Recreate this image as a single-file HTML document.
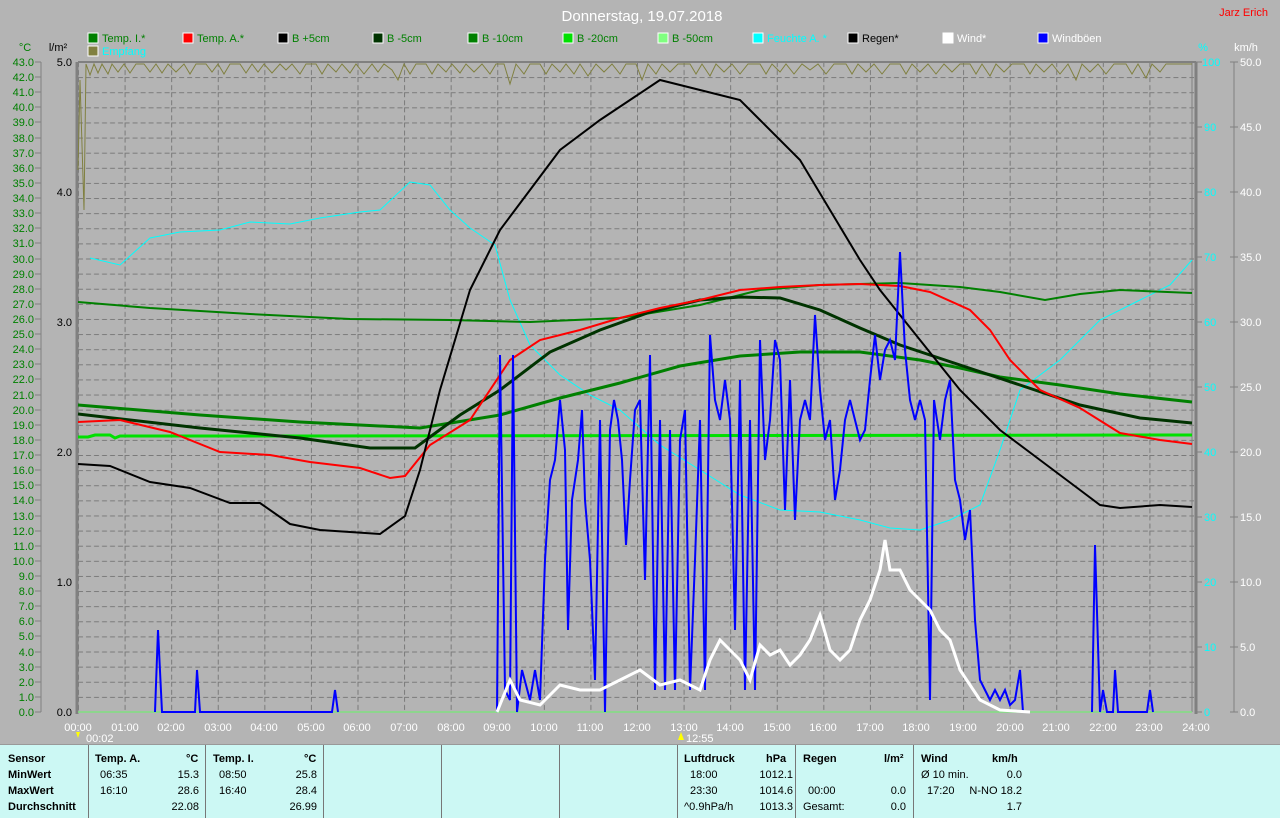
<!DOCTYPE html>
<html><head><meta charset="utf-8"><style>
body{margin:0;width:1280px;height:817px;background:#b4b4b4;overflow:hidden;font-family:"Liberation Sans",sans-serif;}
svg{position:absolute;left:0;top:0}
#tb{position:absolute;left:0;top:744px;width:1280px;height:73px;background:#ccf8f4;border-top:1px solid #999;font-size:11px;color:#000}
.d{position:absolute;top:0;height:73px;border-left:1px solid #777}
.t{position:absolute;white-space:nowrap}
.b{font-weight:bold}
</style></head><body>
<svg width="1280" height="744" font-family="Liberation Sans, sans-serif" font-size="11">
<defs>
<pattern id="g" patternUnits="userSpaceOnUse" x="78" y="62" width="46.583" height="15.116">
<line x1="0" y1="0.5" x2="46.583" y2="0.5" stroke="#7a7a7a" stroke-dasharray="5,3"/>
<line x1="0.5" y1="0" x2="0.5" y2="15.116" stroke="#7a7a7a" stroke-dasharray="5,3"/>
</pattern>
</defs>
<rect x="78" y="62" width="1116" height="650" fill="url(#g)"/>
<line x1="77" y1="62" x2="77" y2="714" stroke="#808080" stroke-width="3"/>
<line x1="1196" y1="62" x2="1196" y2="714" stroke="#808080" stroke-width="3"/>
<line x1="1192" y1="62" x2="1192" y2="712" stroke="#808080" stroke-width="1"/>
<line x1="78" y1="62" x2="1196" y2="62" stroke="#808080" stroke-width="2"/>
<line x1="78" y1="712" x2="1192" y2="712" stroke="#80e080" stroke-width="1.5"/>
<line x1="1234" y1="62" x2="1234" y2="712" stroke="#808080"/>
<text x="642" y="21" fill="#fff" font-size="15" text-anchor="middle">Donnerstag, 19.07.2018</text>
<text x="1268" y="16" fill="#f00" font-size="11" text-anchor="end">Jarz Erich</text>
<g font-size="11">
<rect x="88" y="33" width="10" height="10" fill="#008000" stroke="#fff"/><text x="102" y="42" fill="#008000">Temp. I.*</text>
<rect x="183" y="33" width="10" height="10" fill="#f00" stroke="#fff"/><text x="197" y="42" fill="#008000">Temp. A.*</text>
<rect x="278" y="33" width="10" height="10" fill="#000" stroke="#fff"/><text x="292" y="42" fill="#008000">B +5cm</text>
<rect x="373" y="33" width="10" height="10" fill="#003300" stroke="#fff"/><text x="387" y="42" fill="#008000">B -5cm</text>
<rect x="468" y="33" width="10" height="10" fill="#008000" stroke="#fff"/><text x="482" y="42" fill="#008000">B -10cm</text>
<rect x="563" y="33" width="10" height="10" fill="#00e000" stroke="#fff"/><text x="577" y="42" fill="#008000">B -20cm</text>
<rect x="658" y="33" width="10" height="10" fill="#80ff80" stroke="#fff"/><text x="672" y="42" fill="#008000">B -50cm</text>
<rect x="753" y="33" width="10" height="10" fill="#0ff" stroke="#fff"/><text x="767" y="42" fill="#0ff">Feuchte A. *</text>
<rect x="848" y="33" width="10" height="10" fill="#000" stroke="#fff"/><text x="862" y="42" fill="#000">Regen*</text>
<rect x="943" y="33" width="10" height="10" fill="#fff" stroke="#fff"/><text x="957" y="42" fill="#fff">Wind*</text>
<rect x="1038" y="33" width="10" height="10" fill="#00f" stroke="#fff"/><text x="1052" y="42" fill="#fff">Windböen</text>
<rect x="88" y="46" width="10" height="10" fill="#808040" stroke="#fff"/><text x="102" y="55" fill="#0ff">Empfang</text>
</g>
<text x="25" y="51" fill="#008000" text-anchor="middle">°C</text>
<text x="58" y="51" fill="#000" text-anchor="middle">l/m²</text>
<text x="1203" y="51" fill="#0ff" text-anchor="middle">%</text>
<text x="1246" y="51" fill="#fff" text-anchor="middle">km/h</text>
<g fill="#008000" text-anchor="end">
<text x="34" y="66">43.0</text><text x="34" y="81">42.0</text><text x="34" y="96">41.0</text><text x="34" y="111">40.0</text><text x="34" y="126">39.0</text><text x="34" y="142">38.0</text><text x="34" y="157">37.0</text><text x="34" y="172">36.0</text><text x="34" y="187">35.0</text><text x="34" y="202">34.0</text><text x="34" y="217">33.0</text><text x="34" y="232">32.0</text><text x="34" y="247">31.0</text><text x="34" y="263">30.0</text><text x="34" y="278">29.0</text><text x="34" y="293">28.0</text><text x="34" y="308">27.0</text><text x="34" y="323">26.0</text><text x="34" y="338">25.0</text><text x="34" y="353">24.0</text><text x="34" y="368">23.0</text><text x="34" y="383">22.0</text><text x="34" y="399">21.0</text><text x="34" y="414">20.0</text><text x="34" y="429">19.0</text><text x="34" y="444">18.0</text><text x="34" y="459">17.0</text><text x="34" y="474">16.0</text><text x="34" y="489">15.0</text><text x="34" y="504">14.0</text><text x="34" y="520">13.0</text><text x="34" y="535">12.0</text><text x="34" y="550">11.0</text><text x="34" y="565">10.0</text><text x="34" y="580">9.0</text><text x="34" y="595">8.0</text><text x="34" y="610">7.0</text><text x="34" y="625">6.0</text><text x="34" y="640">5.0</text><text x="34" y="656">4.0</text><text x="34" y="671">3.0</text><text x="34" y="686">2.0</text><text x="34" y="701">1.0</text><text x="34" y="716">0.0</text>
</g>
<path d="M35 62h6M35 77h6M35 92h6M35 107h6M35 122h6M35 138h6M35 153h6M35 168h6M35 183h6M35 198h6M35 213h6M35 228h6M35 243h6M35 259h6M35 274h6M35 289h6M35 304h6M35 319h6M35 334h6M35 349h6M35 364h6M35 379h6M35 395h6M35 410h6M35 425h6M35 440h6M35 455h6M35 470h6M35 485h6M35 500h6M35 516h6M35 531h6M35 546h6M35 561h6M35 576h6M35 591h6M35 606h6M35 621h6M35 636h6M35 652h6M35 667h6M35 682h6M35 697h6M35 712h6M41 62V712" stroke="#808080"/>
<g fill="#000" text-anchor="end">
<text x="72" y="66">5.0</text><text x="72" y="196">4.0</text><text x="72" y="326">3.0</text><text x="72" y="456">2.0</text><text x="72" y="586">1.0</text><text x="72" y="716">0.0</text>
</g>
<g fill="#0ff">
<text x="1202" y="66">100</text><text x="1204" y="131">90</text><text x="1204" y="196">80</text><text x="1204" y="261">70</text><text x="1204" y="326">60</text><text x="1204" y="391">50</text><text x="1204" y="456">40</text><text x="1204" y="521">30</text><text x="1204" y="586">20</text><text x="1204" y="651">10</text><text x="1204" y="716">0</text>
</g>
<path d="M1196 62h6M1196 127h6M1196 192h6M1196 257h6M1196 322h6M1196 387h6M1196 452h6M1196 517h6M1196 582h6M1196 647h6M1196 712h6M1230 62h8M1230 127h8M1230 192h8M1230 257h8M1230 322h8M1230 387h8M1230 452h8M1230 517h8M1230 582h8M1230 647h8M1230 712h8" stroke="#808080"/>
<g fill="#fff">
<text x="1240" y="66">50.0</text><text x="1240" y="131">45.0</text><text x="1240" y="196">40.0</text><text x="1240" y="261">35.0</text><text x="1240" y="326">30.0</text><text x="1240" y="391">25.0</text><text x="1240" y="456">20.0</text><text x="1240" y="521">15.0</text><text x="1240" y="586">10.0</text><text x="1240" y="651">5.0</text><text x="1240" y="716">0.0</text>
</g>
<g fill="#fff" text-anchor="middle">
<text x="78" y="731">00:00</text><text x="125" y="731">01:00</text><text x="171" y="731">02:00</text><text x="218" y="731">03:00</text><text x="264" y="731">04:00</text><text x="311" y="731">05:00</text><text x="357" y="731">06:00</text><text x="404" y="731">07:00</text><text x="451" y="731">08:00</text><text x="497" y="731">09:00</text><text x="544" y="731">10:00</text><text x="590" y="731">11:00</text><text x="637" y="731">12:00</text><text x="684" y="731">13:00</text><text x="730" y="731">14:00</text><text x="777" y="731">15:00</text><text x="823" y="731">16:00</text><text x="870" y="731">17:00</text><text x="916" y="731">18:00</text><text x="963" y="731">19:00</text><text x="1010" y="731">20:00</text><text x="1056" y="731">21:00</text><text x="1103" y="731">22:00</text><text x="1149" y="731">23:00</text><text x="1196" y="731">24:00</text>
</g>
<text x="86" y="742" fill="#fff">00:02</text><path d="M76 732l4 0-2 6z" fill="#ff0"/>
<text x="686" y="742" fill="#fff">12:55</text><path d="M678 740l3-8 3 8z" fill="#ff0"/>
<!-- Empfang -->
<polyline fill="none" stroke="#808040" stroke-width="1" points="78,170 80,80 84,210 86,64 90,75 94,64 98,73 102,64 108,74 112,64 118,72 124,64 130,73 136,64 144,64 150,72 156,64 162,73 168,64 176,72 184,64 190,74 196,64 206,64 212,72 218,64 224,74 230,64 240,64 246,73 252,64 258,72 264,64 272,73 280,64 286,70 292,64 300,74 306,64 316,64 322,74 328,64 336,72 342,64 350,73 356,64 364,74 372,64 378,72 384,64 392,70 398,80 404,64 410,74 416,64 426,64 432,74 438,64 446,72 452,64 460,73 466,64 474,72 482,64 490,74 496,64 504,64 510,84 516,64 524,74 530,64 540,64 546,74 552,64 560,72 566,64 574,74 580,64 588,76 596,64 604,72 612,64 620,74 626,64 636,64 642,80 648,64 656,74 662,64 670,72 678,64 690,64 696,74 702,64 710,76 716,64 724,72 732,64 740,74 748,64 760,64 766,74 772,64 780,72 786,64 794,74 802,64 810,70 818,64 826,74 834,64 846,64 852,74 858,64 866,72 874,64 882,74 890,64 900,64 906,74 912,64 920,72 928,64 936,74 944,64 952,72 960,64 970,64 976,74 982,64 990,76 996,64 1004,72 1012,64 1024,64 1030,74 1036,64 1044,72 1052,64 1060,74 1068,64 1076,80 1082,64 1090,72 1098,64 1106,74 1114,64 1126,64 1132,74 1138,64 1146,78 1152,64 1160,72 1166,64 1192,64"/>
<!-- humidity -->
<polyline fill="none" stroke="#0ff" stroke-width="1" points="90,258 120,265 150,238 180,232 220,230 250,222 290,224 320,218 360,212 380,210 410,182 430,185 450,210 470,228 495,245 510,300 530,345 560,375 590,395 620,410 660,445 700,470 740,495 780,510 820,512 860,520 890,528 920,530 950,520 980,505 1000,450 1020,390 1060,360 1100,320 1140,300 1170,285 1192,260"/>
<!-- B-20 -->
<polyline fill="none" stroke="#00e000" stroke-width="3" points="78,437 88,437 95,435 110,435 115,438 120,436 300,436 1192,435"/>
<!-- Temp I -->
<polyline fill="none" stroke="#008000" stroke-width="2" points="78,302 150,308 250,314 350,319 450,320 530,322 620,318 700,305 760,290 820,285 900,283 960,287 1000,292 1045,300 1080,294 1120,290 1192,293"/>
<!-- B-10 -->
<polyline fill="none" stroke="#008000" stroke-width="3" points="78,405 200,415 300,422 420,428 500,415 560,398 620,383 680,366 740,356 800,352 860,352 920,360 960,368 1000,377 1060,385 1120,394 1192,402"/>
<!-- B-5 -->
<polyline fill="none" stroke="#003300" stroke-width="3" points="78,414 200,428 300,438 370,448 415,448 460,415 500,390 550,352 600,330 650,312 700,300 740,297 780,298 820,310 860,328 900,345 960,365 1020,385 1080,405 1140,418 1192,423"/>
<!-- Temp A -->
<polyline fill="none" stroke="#f00" stroke-width="2" points="78,422 120,420 170,432 220,452 270,455 310,462 360,468 390,478 405,476 430,445 470,420 510,360 540,340 580,330 620,318 660,308 700,300 740,290 780,287 820,285 860,284 900,286 930,292 970,310 990,330 1010,360 1040,390 1080,408 1120,433 1160,440 1192,444"/>
<!-- B+5 -->
<polyline fill="none" stroke="#000" stroke-width="2" points="78,464 110,466 150,482 190,488 230,503 260,503 290,524 320,530 350,532 380,534 405,516 420,470 440,390 470,290 500,230 530,190 560,150 600,120 630,100 660,80 700,90 740,100 760,120 800,160 830,210 860,260 880,290 920,340 960,390 1000,430 1040,460 1080,490 1100,505 1120,508 1160,505 1192,507"/>
<!-- gusts -->
<polyline fill="none" stroke="#00f" stroke-width="2" points="155,712 158,630 162,712 195,712 197,670 200,712 332,712 335,690 338,712"/>
<polyline fill="none" stroke="#00f" stroke-width="2" points="1092,712 1095,545 1100,712 1103,690 1107,712 1113,712 1115,670 1118,712 1147,712 1150,690 1153,712"/>
<polyline fill="none" stroke="#00f" stroke-width="2" points="497,712 500,355 505,690 510,700 513,355 517,712 522,670 530,700 535,670 540,700 545,560 550,480 555,460 560,400 565,450 568,630 572,500 578,460 582,410 585,500 590,560 595,680 600,420 605,712 610,430 614,400 618,420 622,460 626,545 630,480 635,410 640,400 645,580 650,355 655,690 660,420 665,690 670,430 675,690 680,440 685,410 690,690 695,560 700,420 705,690 710,335 715,400 720,420 725,380 730,420 735,630 740,380 745,690 750,420 755,690 760,340 765,460 770,420 775,340 780,360 785,510 790,380 795,520 800,420 805,400 810,420 815,315 820,390 825,440 830,420 835,500 840,470 845,420 850,400 855,420 860,440 865,430 870,380 875,335 880,380 885,350 890,340 895,360 900,252 905,350 910,400 915,420 920,400 925,420 930,700 934,400 940,440 945,400 950,380 955,480 960,500 965,540 970,510 975,620 980,680 985,690 990,700 995,690 1000,700 1005,690 1010,705 1015,700 1020,670 1023,712"/>
<!-- wind -->
<polyline fill="none" stroke="#fff" stroke-width="3" points="497,712 510,680 520,700 540,705 560,685 580,690 600,690 620,680 640,670 660,685 680,680 700,690 710,660 720,640 730,650 740,660 750,680 760,645 770,655 780,650 790,665 800,655 810,640 820,615 830,650 840,660 850,650 860,620 870,600 880,570 885,540 890,570 900,570 910,590 920,600 930,610 940,630 950,640 960,670 980,700 1000,710 1030,712"/>
</svg>
<div id="tb">
<div class="d" style="left:88px"></div><div class="d" style="left:205px"></div><div class="d" style="left:323px"></div><div class="d" style="left:441px"></div><div class="d" style="left:559px"></div><div class="d" style="left:677px"></div><div class="d" style="left:795px"></div><div class="d" style="left:913px"></div>
<div class="t b" style="left:8px;top:8px">Sensor</div><div class="t b" style="left:8px;top:24px">MinWert</div><div class="t b" style="left:8px;top:40px">MaxWert</div><div class="t b" style="left:8px;top:56px">Durchschnitt</div>
<div class="t b" style="left:95px;top:8px">Temp. A.</div><div class="t b" style="left:186px;top:8px">°C</div>
<div class="t" style="left:100px;top:24px">06:35</div><div class="t" style="right:1081px;top:24px">15.3</div>
<div class="t" style="left:100px;top:40px">16:10</div><div class="t" style="right:1081px;top:40px">28.6</div>
<div class="t" style="right:1081px;top:56px">22.08</div>
<div class="t b" style="left:213px;top:8px">Temp. I.</div><div class="t b" style="left:304px;top:8px">°C</div>
<div class="t" style="left:219px;top:24px">08:50</div><div class="t" style="right:963px;top:24px">25.8</div>
<div class="t" style="left:219px;top:40px">16:40</div><div class="t" style="right:963px;top:40px">28.4</div>
<div class="t" style="right:963px;top:56px">26.99</div>
<div class="t b" style="left:684px;top:8px">Luftdruck</div><div class="t b" style="left:766px;top:8px">hPa</div>
<div class="t" style="left:690px;top:24px">18:00</div><div class="t" style="right:487px;top:24px">1012.1</div>
<div class="t" style="left:690px;top:40px">23:30</div><div class="t" style="right:487px;top:40px">1014.6</div>
<div class="t" style="left:684px;top:56px">^0.9hPa/h</div><div class="t" style="right:487px;top:56px">1013.3</div>
<div class="t b" style="left:803px;top:8px">Regen</div><div class="t b" style="left:884px;top:8px">l/m²</div>
<div class="t" style="left:808px;top:40px">00:00</div><div class="t" style="right:374px;top:40px">0.0</div>
<div class="t" style="left:803px;top:56px">Gesamt:</div><div class="t" style="right:374px;top:56px">0.0</div>
<div class="t b" style="left:921px;top:8px">Wind</div><div class="t b" style="left:992px;top:8px">km/h</div>
<div class="t" style="left:921px;top:24px">Ø 10 min.</div><div class="t" style="right:258px;top:24px">0.0</div>
<div class="t" style="left:927px;top:40px">17:20</div><div class="t" style="right:258px;top:40px">N-NO 18.2</div>
<div class="t" style="right:258px;top:56px">1.7</div>
</div>
</body></html>
